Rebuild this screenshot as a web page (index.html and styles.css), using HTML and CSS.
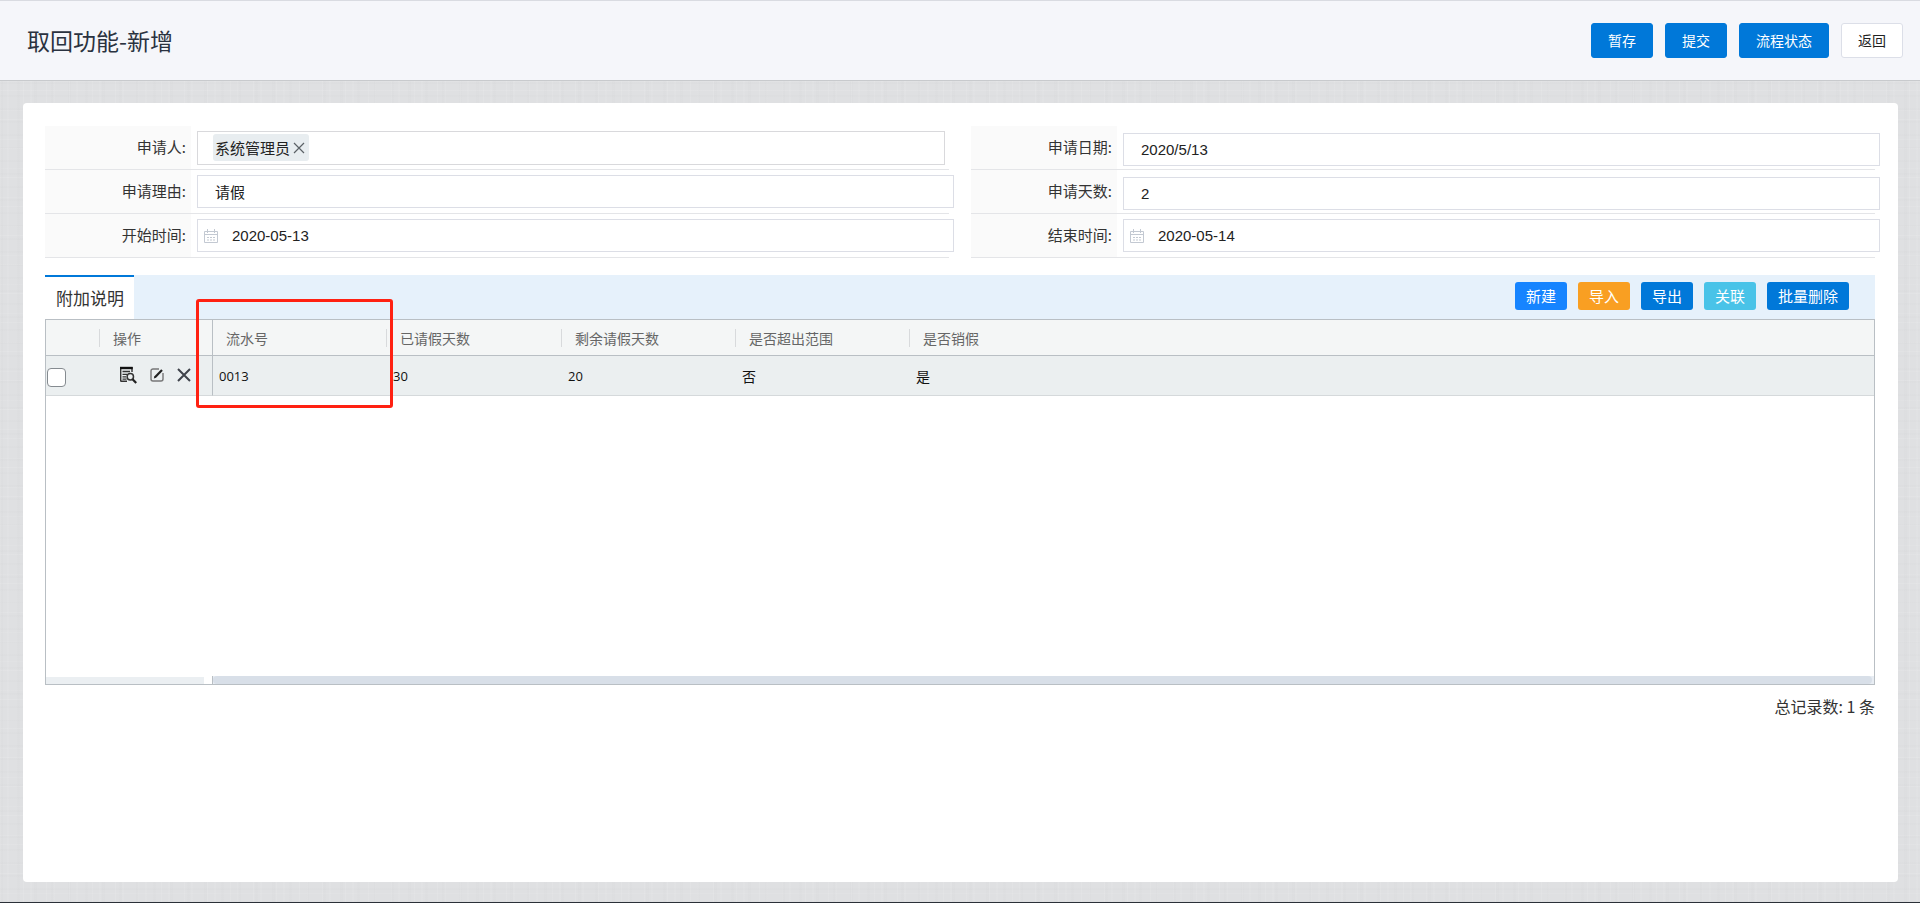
FILE: index.html
```html
<!DOCTYPE html>
<html lang="zh-CN">
<head>
  <meta charset="UTF-8" />
  <title>取回功能-新增</title>
  <link rel="stylesheet" href="styles.css">
</head>
<body>

  <header class="topbar">
    <h1>取回功能-新增</h1>
    <div class="actions">
      <button type="button" class="btn">暂存</button>
      <button type="button" class="btn">提交</button>
      <button type="button" class="btn">流程状态</button>
      <button type="button" class="btn plain">返回</button>
    </div>
  </header>

  <main class="panel">
    <form class="form">
      <div class="row">
        <label for="applicant">申请人:</label>
        <div class="field picker">
          <span class="tag">系统管理员<button type="button" class="tag-close" aria-label="移除">
            <svg width="12" height="12" viewBox="0 0 12 12"><path d="M1 1l10 10M11 1L1 11" stroke="#5b6166" stroke-width="1.2" fill="none"/></svg>
          </button></span>
          <input type="text" id="applicant">
        </div>
      </div>
      <div class="row">
        <label for="applyDate">申请日期:</label>
        <div class="field low"><input type="text" id="applyDate" value="2020/5/13"></div>
      </div>
      <div class="row">
        <label for="reason">申请理由:</label>
        <div class="field"><input type="text" id="reason" value="请假"></div>
      </div>
      <div class="row">
        <label for="days">申请天数:</label>
        <div class="field low"><input type="text" id="days" value="2"></div>
      </div>
      <div class="row">
        <label for="startTime">开始时间:</label>
        <div class="field date">
          <svg class="cal" width="14" height="14" viewBox="0 0 14 14"><path d="M.5 2.5h13v11H.5zM.5 5.5h13M3.5 0v4M10.5 0v4" stroke="#c3c9d2" fill="none"/><path d="M3 8.5h8M3 11h8" stroke="#c3c9d2" stroke-dasharray="2 1" fill="none"/></svg>
          <input type="text" id="startTime" value="2020-05-13">
        </div>
      </div>
      <div class="row">
        <label for="endTime">结束时间:</label>
        <div class="field date">
          <svg class="cal" width="14" height="14" viewBox="0 0 14 14"><path d="M.5 2.5h13v11H.5zM.5 5.5h13M3.5 0v4M10.5 0v4" stroke="#c3c9d2" fill="none"/><path d="M3 8.5h8M3 11h8" stroke="#c3c9d2" stroke-dasharray="2 1" fill="none"/></svg>
          <input type="text" id="endTime" value="2020-05-14">
        </div>
      </div>
    </form>

    <div class="tabs">
      <a href="#grid" class="tab">附加说明</a>
      <div class="tools">
        <button type="button" class="small new">新建</button>
        <button type="button" class="small import">导入</button>
        <button type="button" class="small">导出</button>
        <button type="button" class="small link">关联</button>
        <button type="button" class="small">批量删除</button>
      </div>
    </div>

    <div class="grid" id="grid">
      <table>
        <colgroup>
          <col class="c-check"><col class="c-ops"><col class="c-serial"><col class="c-data"><col class="c-serial"><col class="c-serial"><col>
        </colgroup>
        <thead>
          <tr>
            <th></th>
            <th class="sep">操作</th>
            <th class="frozen">流水号</th>
            <th class="sep">已请假天数</th>
            <th class="sep">剩余请假天数</th>
            <th class="sep">是否超出范围</th>
            <th class="sep">是否销假</th>
          </tr>
        </thead>
        <tbody>
          <tr>
            <td class="check"><input type="checkbox" aria-label="选择"></td>
            <td>
              <div class="ops">
                <button type="button" aria-label="查看">
                  <svg width="18" height="18" viewBox="0 0 18 18" fill="none"><path d="M1.7 1v14.5M13 1v5M1.7 15.3H8" stroke="#333" stroke-width="1.4"/><path d="M1 2h12.700" stroke="#111" stroke-width="2.4"/><path d="M3.5 5.5h7.5M3.5 8.3h4.5M3.5 10.8h3.5M3.5 13.2h4" stroke="#333" stroke-width="1.3"/><circle cx="11.3" cy="10.8" r="3.2" stroke="#333" stroke-width="1.5"/><path d="M13.6 13.2l3.6 3.8" stroke="#222" stroke-width="2.2"/></svg>
                </button>
                <button type="button" aria-label="编辑">
                  <svg width="14" height="14" viewBox="0 0 14 14" fill="none"><path d="M9 1H3a2 2 0 0 0-2 2v8a2 2 0 0 0 2 2h8a2 2 0 0 0 2-2V5" stroke="#777" stroke-width="1.4"/><path d="M5 9.3L12 2" stroke="#222" stroke-width="2.2"/><path d="M3.8 10.5l.7-2.4 1.6 1.6z" fill="#222"/></svg>
                </button>
                <button type="button" aria-label="删除">
                  <svg width="14" height="14" viewBox="0 0 14 14"><path d="M1 1l12 12M13 1L1 13" stroke="#3f434b" stroke-width="2" fill="none"/></svg>
                </button>
              </div>
            </td>
            <td class="frozen">0013</td>
            <td>30</td>
            <td>20</td>
            <td class="word">否</td>
            <td class="word">是</td>
          </tr>
        </tbody>
      </table>
      <div class="scrollbars">
        <div class="bar-left"></div>
        <div class="bar-main"><div class="thumb"></div></div>
      </div>
      <div class="mark"></div>
    </div>

    <p class="total">总记录数: 1 条</p>
  </main>

</body>
</html>
```
FILE: styles.css
```css
* { box-sizing: border-box; }
body {
  margin: 0;
  min-height: 100vh;
  display: flex;
  flex-direction: column;
  border-bottom: 1px solid #2b3038;
  font-family: "Noto Sans CJK SC", sans-serif;
  font-size: 15px;
  color: #333;
  /* linen texture */
  background:
    repeating-linear-gradient(90deg, rgba(255,255,255,0.09) 0 1px, transparent 1px 7px, rgba(255,255,255,0.06) 7px 9px, transparent 9px 23px),
    repeating-linear-gradient(90deg, rgba(0,0,0,0.008) 0 3px, transparent 3px 17px),
    repeating-linear-gradient(0deg, rgba(255,255,255,0.09) 0 1px, transparent 1px 9px, rgba(255,255,255,0.06) 9px 10px, transparent 10px 29px),
    repeating-linear-gradient(0deg, rgba(0,0,0,0.008) 0 2px, transparent 2px 13px),
    #dfe0e2;
}
button, input { font-family: inherit; }
button { cursor: pointer; border: 0; padding: 0; }

.topbar {
  display: flex;
  align-items: center;
  justify-content: space-between;
  height: 81px;
  padding: 0 17px 0 27px;
  background: #f5f6fa;
  border-top: 1px solid #d9dbe1;
  border-bottom: 1px solid #c8cacd;
}
.topbar h1 { margin: 0; padding-bottom: 2px; font-size: 23px; font-weight: 400; color: #2a3240; }
.actions { display: flex; gap: 12px; }
.btn {
  height: 35px;
  padding: 0 16px 2px;
  border: 1px solid #0078d9;
  border-radius: 3px;
  background: #0078d9;
  color: #fff;
  font-size: 14px;
}
.btn.plain { background: #fff; border-color: #dcdfe8; color: #222; }

.panel {
  flex: 1;
  margin: 22px 22px 20px 23px;
  padding: 23px 23px 20px 22px;
  background: #fff;
  border-radius: 4px;
}

.form {
  display: grid;
  grid-template-columns: 1fr 1fr;
  column-gap: 22px;
}
.row {
  display: flex;
  align-items: center;
  height: 44px;
  border-bottom: 1px solid #e4e5e8;
}
.row label {
  width: 146px;
  height: 43px;
  line-height: 42px;
  padding-right: 5px;
  margin-right: 6px;
  background: #fafafa;
  text-align: right;
}
.field {
  flex: 1;
  display: flex;
  height: 33px;
  margin-right: -5px;
  border: 1px solid #dcdee6;
  background: #fff;
}
.field input {
  flex: 1;
  min-width: 0;
  border: 0;
  outline: 0;
  padding: 0 17px;
  background: transparent;
  font-family: "Liberation Sans", "Noto Sans CJK SC", sans-serif;
  font-size: 15px;
  color: #222;
}
.field.low { margin-top: 3px; }
.field.picker {
  height: 34px;
  margin-right: 4px;
  padding-left: 15px;
  align-items: center;
  border-color: #d9d9dc;
}
.tag {
  display: flex;
  align-items: center;
  gap: 1px;
  height: 27px;
  padding: 0 2px;
  border-radius: 3px;
  background: #e8edf0;
  font-size: 15px;
  color: #222;
}
.tag-close { display: flex; padding: 2px; background: none; }
.field.date { align-items: center; padding-left: 6px; }
.field.date input { padding-left: 14px; }

.tabs {
  display: flex;
  justify-content: space-between;
  height: 44px;
  margin-top: 17px;
  background: #e6f1fb;
}
.tab {
  padding: 0 10px 0 11px;
  border-top: 2px solid #0078d9;
  background: #fff;
  color: #333;
  font-size: 17px;
  line-height: 42px;
  text-decoration: none;
}
.tools { display: flex; gap: 11px; padding: 7px 26px 0 0; }
.small {
  height: 28px;
  padding: 0 11px 1px;
  border-radius: 3px;
  background: #0078d9;
  color: #fff;
  font-size: 15px;
}
.small.new { background: #1684ff; }
.small.import { background: #f99f22; }
.small.link { background: #49c3e8; }

.grid {
  position: relative;
  display: flex;
  flex-direction: column;
  justify-content: space-between;
  min-height: 366px;
  border: 1px solid #b9bfc4;
}
table { width: 100%; table-layout: fixed; border-collapse: separate; border-spacing: 0; }
.c-check { width: 53px; }
.c-ops { width: 113px; }
.c-serial { width: 174px; }
.c-data { width: 175px; }
th {
  height: 36px;
  padding: 0 14px;
  background: #f4f6f6;
  border-bottom: 1px solid #b9bfc4;
  color: #666;
  font-size: 14px;
  font-weight: 400;
  line-height: 18px;
  text-align: left;
}
th.sep {
  background: linear-gradient(#d8dadc, #d8dadc) 0 9px / 1px 18px no-repeat #f4f6f6;
}
td {
  height: 40px;
  padding: 0 7px;
  background: #ebeff0;
  border-bottom: 1px solid #d5d9db;
  color: #111;
  font-family: "Open Sans", "Noto Sans CJK SC", sans-serif;
  font-size: 13px;
}
td.word { font-size: 14px; }
th.frozen, td.frozen { padding-left: 13px; border-left: 1px solid #b9bfc4; }
td.frozen { padding-left: 6px; }
td.check { padding: 4px 0 0 1px; }
td.check input {
  display: block;
  appearance: none;
  width: 19px;
  height: 19px;
  margin: 0;
  border: 1px solid #858b90;
  border-radius: 4px;
  background: #fff;
}
.ops { display: flex; align-items: center; gap: 13px; padding: 0 0 2px 13px; }
.ops button { display: flex; background: none; }

.scrollbars { display: flex; height: 8px; }
.bar-left { width: 158px; margin: 1px 8px 0 0; background: #ebeff2; }
.bar-main { flex: 1; padding-right: 2px; border-left: 1px solid #b9bfc4; background: #e8edf3; }
.thumb { height: 8px; border-radius: 4px; background: #d8dfe8; }

/* highlight box over the serial number column */
.mark {
  position: absolute;
  left: 150px;
  top: -21px;
  width: 197px;
  height: 109px;
  border: 3px solid #ff2112;
  border-radius: 3px;
  pointer-events: none;
}

.total { margin: 9px 0 0; font-size: 16px; line-height: 24px; text-align: right; }
```
